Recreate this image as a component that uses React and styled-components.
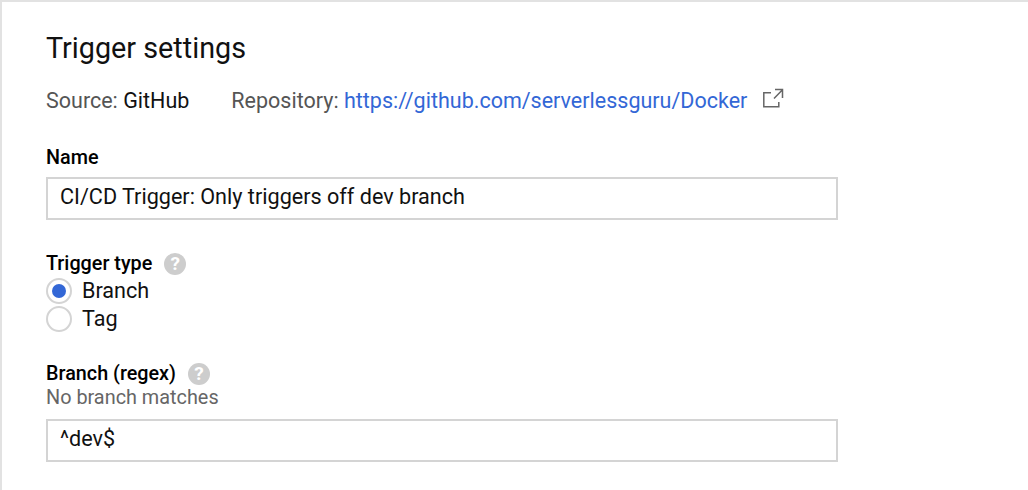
import React from "react";
import styled, { createGlobalStyle } from "styled-components";

const Global = createGlobalStyle`
  html, body { margin: 0; padding: 0; background: #fff; }
  body { font-family: Roboto, "Liberation Sans", sans-serif; color: #000; }
`;
const Page = styled.div`
  width: 1028px; height: 490px; box-sizing: border-box; overflow: hidden;
  background: #fff; border-top: 2px solid #e2e2e2; border-left: 2px solid #e2e2e2;
  padding: 29px 0 0 44px;
`;
const Title = styled.h1`
  margin: 0; font-size: 28.75px; line-height: 34px; font-weight: 400; color: #111;
`;
const Meta = styled.div`
  display: flex; align-items: center; margin-top: 24px; height: 24px;
  font-size: 21.5px; line-height: 24px;
`;
const MetaItem = styled.span`
  color: #555; margin-right: ${p => p.$gap || 0}px; white-space: pre;
`;
const Value = styled.span` color: #111; `;
const Link = styled.a` color: #3367d6; text-decoration: none; `;
const External = styled.svg` width: 22px; height: 22px; margin-left: 16px; margin-top: -4px; color: #666; `;
const Label = styled.div`
  display: flex; align-items: center; font-size: 19.8px; line-height: 24px; font-weight: 500; color: #000;
  margin-top: ${p => p.$top}px;
`;
const Input = styled.div`
  box-sizing: border-box; width: 792px; height: 43px; margin-top: ${p => p.$top || 0}px;
  border: 2px solid #d4d4d4; padding-left: 12px;
  font-size: 21.6px; line-height: 35px; color: #111;
`;
const Help = styled.span`
  display: inline-flex; align-items: center; justify-content: center; width: 22px; height: 22px;
  margin-left: 12px; border-radius: 50%; background: #cdcdcd; color: #fff;
  font-size: 19px; font-weight: 700; line-height: 22px;
`;
const Radios = styled.div` margin-top: 1px; `;
const RadioRow = styled.div`
  display: flex; align-items: center; height: 28px; font-size: 21.6px; color: #111;
`;
const RadioText = styled.span` line-height: 24px; margin-top: -1px; `;
const Radio = styled.span`
  box-sizing: border-box; width: 26px; height: 26px; border-radius: 50%; border: 2px solid #d4d4d4;
  margin-right: 10px; display: flex; align-items: center; justify-content: center;
  &::after { content: ""; width: 14px; height: 14px; border-radius: 50%; background: ${p => (p.$on ? "#3367d6" : "transparent")}; }
`;
const Hint = styled.div` font-size: 19.85px; line-height: 24px; color: #666; `;

export default function App() {
  return (
    <Page>
      <Global />
      <Title>Trigger settings</Title>
      <Meta>
        <MetaItem $gap={42}>Source: <Value>GitHub</Value></MetaItem>
        <MetaItem>Repository: <Link>https://github.com/serverlessguru/Docker</Link></MetaItem>
        <External viewBox="0 0 22 22" fill="none" stroke="currentColor" strokeWidth="1.5">
          <path d="M8 4.8H.8v14h15V14" />
          <path d="M11 10.5L19.5 1.8M12 1.5h7.5V10" />
        </External>
      </Meta>
      <Label $top={33}>Name</Label>
      <Input $top={7}>CI/CD Trigger: Only triggers off dev branch</Input>
      <Label $top={32}>Trigger type<Help>?</Help></Label>
      <Radios>
        <RadioRow><Radio $on /><RadioText>Branch</RadioText></RadioRow>
        <RadioRow><Radio /><RadioText>Tag</RadioText></RadioRow>
      </Radios>
      <Label $top={29}>Branch (regex)<Help>?</Help></Label>
      <Hint>No branch matches</Hint>
      <Input $top={9}>^dev$</Input>
    </Page>
  );
}
